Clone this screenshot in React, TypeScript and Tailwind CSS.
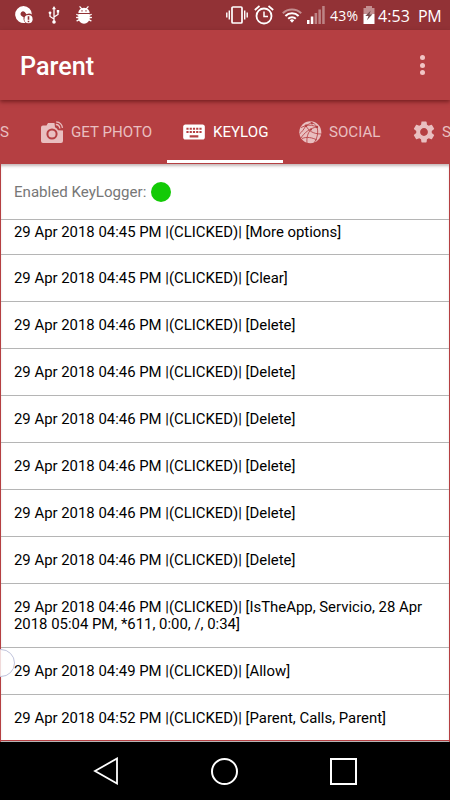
import React from "react";
import { MdKeyboard, MdSettings } from "react-icons/md";

const rows = [
  "29 Apr 2018 04:45 PM |(CLICKED)| [Clear]",
  "29 Apr 2018 04:46 PM |(CLICKED)| [Delete]",
  "29 Apr 2018 04:46 PM |(CLICKED)| [Delete]",
  "29 Apr 2018 04:46 PM |(CLICKED)| [Delete]",
  "29 Apr 2018 04:46 PM |(CLICKED)| [Delete]",
  "29 Apr 2018 04:46 PM |(CLICKED)| [Delete]",
  "29 Apr 2018 04:46 PM |(CLICKED)| [Delete]",
  "29 Apr 2018 04:46 PM |(CLICKED)| [IsTheApp, Servicio, 28 Apr 2018 05:04 PM, *611, 0:00, /, 0:34]",
  "29 Apr 2018 04:49 PM |(CLICKED)| [Allow]",
  "29 Apr 2018 04:52 PM |(CLICKED)| [Parent, Calls, Parent]",
];

function StatusBar() {
  return (
    <div className="flex h-[30px] shrink-0 items-center bg-[#923236] pl-[15px] text-white">
      <svg width="18" height="18" viewBox="0 0 18 18" className="shrink-0">
        <path fill="currentColor" fillRule="evenodd" d="M8.5 0a8.5 8.5 0 1 0 2 16.8 5 5 0 0 1-1.8-5.2l-2-1.5a2.6 2.6 0 1 1 3.8-3.2l1 1.3a5 5 0 0 1 5.4.2A8.5 8.5 0 0 0 8.5 0Z" />
        <circle cx="13.5" cy="13.2" r="4.1" fill="currentColor" />
        <path stroke="#923236" strokeWidth="1.6" d="M13.5 10.3v3.5m0 1v1.4" />
      </svg>
      <svg width="12" height="18" viewBox="0 0 12 18" className="ml-[15px] shrink-0" fill="none" stroke="currentColor" strokeWidth="1.3">
        <path d="M6 2v14M6 13 2 10.5V7M6 11l4-2.5V5.5" />
        <path fill="currentColor" stroke="none" d="M6 0 8 3.3H4ZM8.8 4h2.4v2.6H8.8Z" />
        <circle cx="2" cy="6.8" r="1.4" fill="currentColor" stroke="none" />
        <circle cx="6" cy="16" r="1.8" fill="currentColor" stroke="none" />
      </svg>
      <svg width="16" height="18" viewBox="0 0 16 18" className="ml-4 shrink-0">
        <path fill="currentColor" d="M2.3 7A5.7 5.2 0 0 1 13.7 7ZM2.3 8.1h11.4v4.2a5.7 5.4 0 0 1-11.4 0Z" />
        <path stroke="currentColor" strokeWidth="1.3" strokeLinecap="round" d="m4 .8 2 2.4m6-2.4-2 2.4M.8 8.5 3 9.5m12.2-1L13 9.5M.6 11.5h14.8M1 14.8l2.3-1.2m11.7 1.2-2.3-1.2" />
        <path fill="#923236" d="M5.4 4.3h1.2v1.2H5.4Zm4 0h1.2v1.2H9.4Z" />
      </svg>
      <svg width="22" height="18" viewBox="0 0 22 18" className="ml-[134px] shrink-0" fill="none" stroke="currentColor">
        <rect x="6" y="1" width="10" height="16" rx="1" strokeWidth="1.7" />
        <path strokeWidth="1.4" d="M3.3 4.5v9M.8 6.5v5M18.7 4.5v9M21.2 6.5v5" />
      </svg>
      <svg width="20" height="20" viewBox="0 0 20 20" className="ml-[6px] shrink-0" fill="none" stroke="currentColor">
        <circle cx="10" cy="11" r="7.5" strokeWidth="1.8" />
        <path strokeWidth="1.7" d="M.8 5 5.5 1m9 0 4.7 4" />
        <path strokeWidth="1.5" d="M10 6.5v5h4" />
      </svg>
      <svg width="20" height="15" viewBox="0 0 20 15" className="ml-2 shrink-0" fill="none" stroke="currentColor">
        <path strokeWidth="2" opacity=".45" d="M.8 5.2a13.2 13.2 0 0 1 18.4 0" />
        <path strokeWidth="2" d="M3.4 8a9.3 9.3 0 0 1 13.2 0M6.2 10.8a5.4 5.4 0 0 1 7.6 0" />
        <path fill="currentColor" stroke="none" d="M7.8 12.2a3.2 3.2 0 0 1 4.4 0L10 14.7Z" />
      </svg>
      <svg width="18" height="18" viewBox="0 0 18 18" className="ml-[5px] shrink-0" fill="currentColor">
        <path d="M0 14h2.5v4H0ZM3.8 10.5h2.5V18H3.8Z" />
        <path opacity=".4" d="M7.6 7h2.5v11H7.6ZM11.4 3.5h2.5V18h-2.5ZM15.2 0h2.5v18h-2.5Z" />
      </svg>
      <span className="ml-[5px] w-[30px] whitespace-nowrap pt-[2px] font-['Open_Sans',sans-serif] text-[14px] leading-none tracking-[0.2px]">43%</span>
      <svg width="12" height="18" viewBox="0 0 12 18" className="ml-[3px] shrink-0">
        <path fill="currentColor" opacity=".45" d="M3 0h6v2h2.5v6H.5V2H3Z" />
        <path fill="currentColor" d="M.5 8h11v10H.5Z" />
        <path fill="#75494b" d="M7.8 4.5 2.3 10h3.2l-1.6 4.2 5.6-5.9H6.4Z" />
      </svg>
      <span className="ml-[3px] w-[33px] whitespace-nowrap pt-[2px] font-['Open_Sans',sans-serif] text-[16px] leading-none tracking-[0.1px]">4:53</span>
      <span className="ml-[7px] whitespace-nowrap pt-[2px] font-['Open_Sans',sans-serif] text-[16px] leading-none tracking-[-0.3px]">PM</span>
    </div>
  );
}

function CameraIcon() {
  return (
    <svg width="23" height="23" viewBox="0 0 23 23" className="shrink-0">
      <path fill="currentColor" d="M2 4.5h3.5L7 2h6.5l.5 4.2a5.2 5.2 0 0 1 3 3l5 .2V20a2 2 0 0 1-2 2H2a2 2 0 0 1-2-2V6.5a2 2 0 0 1 2-2Z" />
      <circle cx="11" cy="13" r="4.6" fill="none" stroke="#b53f42" strokeWidth="2" />
      <path fill="none" stroke="currentColor" strokeWidth="1.3" d="M14.8 3.5a4.2 4.2 0 0 1 4 4M15.2.8a7 7 0 0 1 6.3 6" />
    </svg>
  );
}

function NetworkGlobeIcon() {
  return (
    <svg width="23" height="23" viewBox="0 0 23 23" className="shrink-0">
      <circle cx="11.3" cy="11.3" r="11" fill="currentColor" />
      <g fill="none" stroke="#b53f42" strokeWidth="0.85">
        <path d="M2 6.5 7 4.5l6-3M7 4.5c4-.6 7-.3 11 1.5M11.5 1c3 1 5 2.5 6.5 5M7 4.5C5 8 3 11 .5 13M7 4.5c2 5 7 8.5 15 8.5M18 6C11 7 5 12 2 17M18 6c1.5 5 .5 11-3 16M12 8.5C8.5 12 7.5 17 8 22M3 17.5c5-2 10-1 15 1.5" />
      </g>
      <g fill="#b53f42">
        <circle cx="7" cy="4.7" r="1.3" />
        <circle cx="13" cy="2.5" r="1" />
        <circle cx="18" cy="6" r="1.2" />
        <circle cx="12" cy="8.5" r="1" />
      </g>
    </svg>
  );
}

export default function App() {
  return (
    <div className="relative flex h-[800px] w-[450px] flex-col overflow-hidden bg-[#b53f42] font-[Roboto,sans-serif]">
      <StatusBar />
      <header className="z-10 flex h-[70px] shrink-0 items-center justify-between bg-[#b53f42] pl-5 pr-[25px] shadow-[0_2px_4px_rgba(60,0,0,0.5)]">
        <h1 className="pt-[3px] text-[25.2px] font-medium leading-none text-white">Parent</h1>
        <div className="flex flex-col gap-[2.5px]">
          <span className="size-[5px] rounded-full bg-[#f2c4c4]" />
          <span className="size-[5px] rounded-full bg-[#f2c4c4]" />
          <span className="size-[5px] rounded-full bg-[#f2c4c4]" />
        </div>
      </header>
      <nav className="flex h-[63px] shrink-0 overflow-hidden whitespace-nowrap text-[15.1px] text-[#e9bfc0]">
        <div className="flex w-[41px] shrink-0 items-center pt-px">S</div>
        <div className="flex w-[126px] shrink-0 items-center gap-[7px] pt-px">
          <CameraIcon />
          <span>GET PHOTO</span>
        </div>
        <div className="flex w-[116px] shrink-0 items-center border-b-[3px] border-white pl-[14px] pt-[4px] text-white">
          <MdKeyboard size={26} className="shrink-0" />
          <span className="ml-[6px]">KEYLOG</span>
        </div>
        <div className="flex w-[128px] shrink-0 items-center gap-[7px] pl-4 pt-px">
          <NetworkGlobeIcon />
          <span>SOCIAL</span>
        </div>
        <div className="flex shrink-0 items-center gap-[5px] pt-px">
          <MdSettings size={26} className="shrink-0" />
          <span>S</span>
        </div>
      </nav>
      <main className="flex h-[579px] shrink-0 flex-col border border-b-2 border-[#b53f42] bg-white text-[14.9px] leading-[17px] text-black shadow-[inset_0_3px_3px_-1px_rgba(60,20,20,0.3)]">
        <div className="flex h-[56px] shrink-0 items-center gap-[5px] border-b border-[#b5b5b5] pl-[13px] text-[15.1px] text-[#777]">
          <span className="pt-px">Enabled KeyLogger:</span>
          <span className="size-5 rounded-full bg-[#13ca06]" />
        </div>
        <div className="h-[35px] shrink-0 border-b border-[#b5b5b5] pl-[13px] pt-[4px]">29 Apr 2018 04:45 PM |(CLICKED)| [More options]</div>
        {rows.map((row, i) => (
          <div key={i} className="shrink-0 border-b border-[#b5b5b5] pb-[14px] pl-[13px] pr-[13px] pt-[15px]">{row}</div>
        ))}
      </main>
      <footer className="flex h-[58px] shrink-0 items-center bg-black pl-[93px]">
        <svg width="26" height="28" viewBox="0 0 26 28" fill="none" stroke="#fff" strokeWidth="1.8"><path d="M2 14 24 1.5v25Z" /></svg>
        <span className="ml-[92px] size-[27px] rounded-full border-2 border-white" />
        <span className="ml-[92px] size-[27px] border-2 border-white" />
      </footer>
      <div className="absolute left-[-13px] top-[649px] size-[28px] rounded-full border border-[#bfc3dc] bg-white/80" />
    </div>
  );
}
